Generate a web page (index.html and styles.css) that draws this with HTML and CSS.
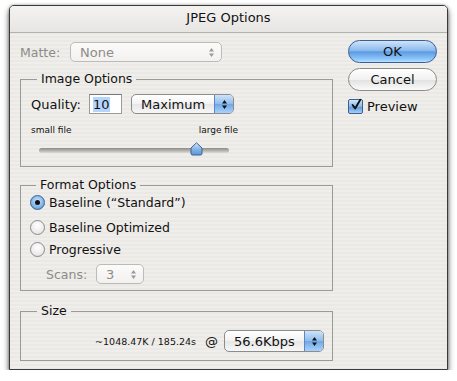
FILE: index.html
```html
<!DOCTYPE html>
<html lang="en">
<head>
  <meta charset="UTF-8">
  <title>JPEG Options</title>
  <link rel="stylesheet" href="styles.css">
</head>
<body>
  <div class="window">
    <div class="titlebar">JPEG Options</div>

    <div class="content">
      <div class="main">
        <!-- Matte (disabled) -->
        <div class="matte-row">
          <span class="dim matte-label">Matte:</span>
          <div class="popup disabled matte-popup">
            <span class="popup-text">None</span>
            <span class="arrows">
              <svg width="7" height="11" viewBox="0 0 7 11"><path d="M3.5 1 L6 4.5 H1 Z M3.5 10 L6 6.5 H1 Z" fill="#9a9a9a"/></svg>
            </span>
          </div>
        </div>

        <!-- Image Options -->
        <fieldset class="group image-group">
          <legend>Image Options</legend>
          <div class="quality-row">
            <span class="quality-label">Quality:</span>
            <div class="textfield"><span class="selected">10</span></div>
            <div class="popup quality-popup">
              <span class="popup-text">Maximum</span>
              <span class="arrows blue">
                <svg width="7" height="11" viewBox="0 0 7 11"><path d="M3.5 1 L6 4.5 H1 Z M3.5 10 L6 6.5 H1 Z" fill="#111"/></svg>
              </span>
            </div>
          </div>
          <div class="scale-labels">
            <span>small file</span>
            <span>large file</span>
          </div>
          <div class="slider">
            <div class="track"></div>
            <svg class="thumb" width="13" height="14" viewBox="0 0 13 14">
              <defs>
                <linearGradient id="tg" x1="0" y1="0" x2="0" y2="1">
                  <stop offset="0" stop-color="#d6e8fa"/>
                  <stop offset="0.5" stop-color="#86b6ea"/>
                  <stop offset="1" stop-color="#5d95d6"/>
                </linearGradient>
              </defs>
              <path d="M6.5 0.8 L12 6 V11.5 Q12 13 10.5 13 H2.5 Q1 13 1 11.5 V6 Z" fill="url(#tg)" stroke="#3f5f8c" stroke-width="1"/>
            </svg>
          </div>
        </fieldset>

        <!-- Format Options -->
        <fieldset class="group format-group">
          <legend>Format Options</legend>
          <label class="radio-row first"><span class="radio on"></span>Baseline (&ldquo;Standard&rdquo;)</label>
          <label class="radio-row second"><span class="radio"></span>Baseline Optimized</label>
          <label class="radio-row third"><span class="radio"></span>Progressive</label>
          <div class="scans-row">
            <span class="dim scans-label">Scans:</span>
            <div class="popup disabled scans-popup">
              <span class="popup-text">3</span>
              <span class="arrows">
                <svg width="7" height="11" viewBox="0 0 7 11"><path d="M3.5 1 L6 4.5 H1 Z M3.5 10 L6 6.5 H1 Z" fill="#9a9a9a"/></svg>
              </span>
            </div>
          </div>
        </fieldset>

        <!-- Size -->
        <fieldset class="group size-group">
          <legend>Size</legend>
          <div class="size-row">
            <span class="size-info">~1048.47K / 185.24s</span>
            <span class="at">@</span>
            <div class="popup speed-popup">
              <span class="popup-text">56.6Kbps</span>
              <span class="arrows blue">
                <svg width="7" height="11" viewBox="0 0 7 11"><path d="M3.5 1 L6 4.5 H1 Z M3.5 10 L6 6.5 H1 Z" fill="#111"/></svg>
              </span>
            </div>
          </div>
        </fieldset>
      </div>

      <div class="side">
        <button class="btn default">OK</button>
        <button class="btn">Cancel</button>
        <label class="check-row">
          <span class="checkbox">
            <svg width="14" height="14" viewBox="0 0 14 14"><path d="M3 7 L6 11 L12 1" fill="none" stroke="#111" stroke-width="2.2" stroke-linecap="round" stroke-linejoin="round"/></svg>
          </span>
          Preview
        </label>
      </div>
    </div>
  </div>
</body>
</html>
```

FILE: styles.css
```css
/* Aqua dialog look */
* {
  box-sizing: border-box;
}

body {
  margin: 0;
  background: #ffffff;
  font-family: "DejaVu Sans", sans-serif;
  font-size: 12.5px;
  color: #111;
}

.window {
  width: 439px;
  height: 365px;
  margin: 5px 0 0 9px;
  border: 1px solid #3c3a38;
  border-radius: 5px 5px 0 0;
  background-color: #efedea;
  background-image: repeating-linear-gradient(
      180deg,
      #f0eeeb 0px,
      #f0eeeb 2px,
      #ebe9e6 2px,
      #ebe9e6 4px
  );
  box-shadow: 0 4px 6px rgba(0, 0, 0, 0.6),
              0 0 3px rgba(0, 0, 0, 0.35);
  overflow: hidden;
}

.titlebar {
  height: 27px;
  line-height: 24px;
  text-align: center;
  font-size: 13px;
  border-bottom: 1px solid #b3b1ae;
  background: linear-gradient(180deg, #f4f3f1, #e8e6e3);
}

.content {
  display: flex;
  padding-left: 10px;
}

.main {
  width: 313px;
}

.side {
  width: 89px;
  margin-left: 15px;
  display: flex;
  flex-direction: column;
}

.dim {
  color: #8d8b89;
}

/* Popups */
.popup {
  display: flex;
  align-items: center;
  height: 20px;
  border: 1px solid #8c8c8c;
  border-radius: 5px;
  background: linear-gradient(180deg, #ffffff, #f2f2f2 50%, #e6e6e6 51%, #f7f7f7);
  overflow: hidden;
  font-size: 13px;
}

.popup-text {
  flex: 1;
  padding-left: 9px;
}

.arrows {
  width: 19px;
  height: 100%;
  display: flex;
  align-items: center;
  justify-content: center;
}

.arrows.blue {
  border-left: 1px solid #5f86bd;
  background: linear-gradient(180deg, #cfe3f8, #8ebcec 50%, #6ea7e6 51%, #a9d2fb);
}

.popup.disabled {
  border-color: #bdbbb8;
  background: linear-gradient(180deg, #fbfbfa, #f2f1ef);
  color: #8d8b89;
}

.matte-row {
  display: flex;
  align-items: center;
  margin-top: 9px;
  height: 20px;
}

.matte-label {
  width: 50px;
}

.matte-popup {
  width: 152px;
}

/* Group boxes */
.group {
  margin: 0;
  padding: 0 8px 0 10px;
  border: 1px solid #9c9a97;
}

.group legend {
  margin-left: 6px;
  padding: 0 4px;
  font-size: 12.5px;
  line-height: 16px;
}

.image-group {
  margin-top: 9px;
  height: 96px;
  padding-top: 7px;
}

.quality-row {
  display: flex;
  align-items: center;
  height: 20px;
}

.quality-label {
  width: 58px;
  font-size: 13px;
}

.textfield {
  width: 33px;
  height: 20px;
  border: 1px solid #9a9a9a;
  border-top-color: #777;
  background: #fff;
  padding: 2px 0 0 3px;
  font-size: 13px;
  line-height: 15px;
}

.selected {
  background: #b5d5fd;
}

.quality-popup {
  width: 103px;
  margin-left: 9px;
}

.scale-labels {
  display: flex;
  justify-content: space-between;
  width: 207px;
  margin-top: 10px;
  font-size: 9px;
  line-height: 12px;
}

.slider {
  position: relative;
  width: 190px;
  height: 15px;
  margin: 6px 0 0 8px;
}

.track {
  position: absolute;
  left: 0;
  right: 0;
  top: 6px;
  height: 5px;
  border-radius: 3px;
  background: linear-gradient(180deg, #8d8b88, #bbb9b6 60%, #dddbd8);
}

.thumb {
  position: absolute;
  left: 151px;
  top: 0;
}

/* Format options */
.format-group {
  margin-top: 10px;
  height: 114px;
  padding-top: 0;
  padding-left: 9px;
}

.radio-row {
  display: flex;
  align-items: center;
  height: 22px;
}

.radio-row.first {
  margin-top: -2px;
}

.radio-row.second {
  margin-top: 3px;
}

.radio {
  width: 15px;
  height: 15px;
  margin-right: 4px;
  border-radius: 50%;
  border: 1px solid #8a8a8a;
  background: radial-gradient(circle at 50% 35%, #ffffff, #e9e9e9 70%, #d0d0d0);
  position: relative;
}

.radio.on {
  border-color: #3e5f8e;
  background: radial-gradient(circle at 50% 40%, #d3e6fa, #7fb3ea 60%, #4d8ad0);
}

.radio.on::after {
  content: '';
  position: absolute;
  left: 4px;
  top: 4px;
  width: 5px;
  height: 5px;
  border-radius: 50%;
  background: #111;
}

.scans-row {
  display: flex;
  align-items: center;
  margin-top: 4px;
  padding-left: 16px;
}

.scans-label {
  width: 50px;
}

.scans-popup {
  width: 48px;
}

/* Size */
.size-group {
  margin-top: 12px;
  height: 58px;
  padding-top: 11px;
}

.size-row {
  display: flex;
  align-items: center;
  justify-content: flex-end;
}

.size-info {
  font-size: 9.5px;
}

.at {
  margin: 0 6px 0 9px;
  font-size: 13px;
}

.speed-popup {
  width: 100px;
  height: 22px;
}

/* Buttons */
.btn {
  height: 23px;
  border-radius: 12px;
  border: 1px solid #8a8a8a;
  font-family: inherit;
  font-size: 13px;
  color: #111;
  background: linear-gradient(180deg, #ffffff, #f1f1f1 50%, #e1e1e1 52%, #fafafa);
  padding: 0;
}

.btn.default {
  margin-top: 7px;
  border-color: #3b5e94;
  background: linear-gradient(180deg, #cfe4fa, #8bbbee 45%, #5d9ae0 52%, #8cc5fb 85%, #b7e0ff);
}

.btn + .btn {
  margin-top: 5px;
}

.check-row {
  display: flex;
  align-items: center;
  margin-top: 8px;
  font-size: 13px;
}

.checkbox {
  width: 15px;
  height: 15px;
  margin-right: 4px;
  border: 1px solid #3e5f8e;
  border-radius: 2px;
  background: linear-gradient(180deg, #d3e6fa, #86b7ea 50%, #5d97d9 52%, #a6cff8);
  display: flex;
  align-items: center;
  justify-content: center;
}

.checkbox svg {
  margin-top: -3px;
  margin-left: 1px;
}
```
